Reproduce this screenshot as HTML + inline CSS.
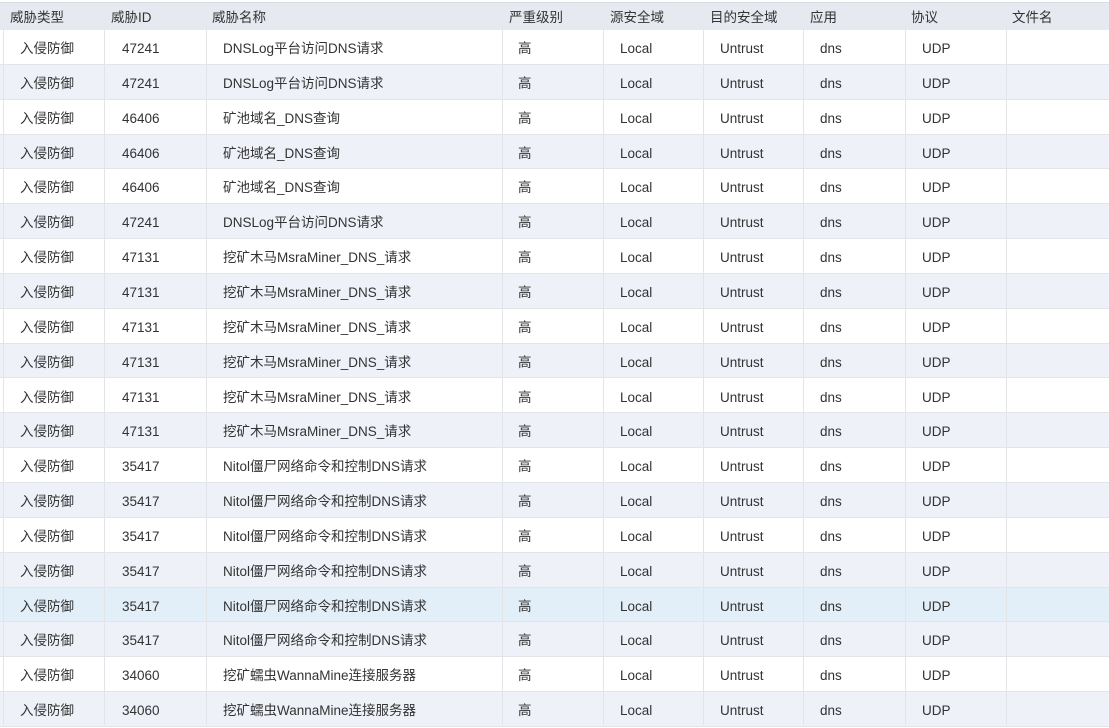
<!DOCTYPE html><html><head><meta charset="utf-8"><style>
body{margin:0;width:1109px;height:725px;overflow:hidden;background:#fff;font-family:"Liberation Sans","Noto Sans CJK SC",sans-serif;font-size:13.5px;color:#333}
.h{position:absolute;top:2px;left:0;width:1109px;height:28px;background:#e6eaf0;border-top:1px solid #d8dce3}
.h span{position:absolute;top:1px;line-height:28px;height:28px;color:#333}
.r{position:absolute;left:0;width:1109px;height:34.85px;border-bottom:1px solid #e2e4e8;box-sizing:border-box}
.r span{position:absolute;top:2px;line-height:34px;height:34px}
.v{position:absolute;top:30px;bottom:0;width:1px;background:#e2e4e8}
</style></head><body>
<div class="h"><span style="left:10px">威胁类型</span><span style="left:111px">威胁ID</span><span style="left:212px">威胁名称</span><span style="left:509px">严重级别</span><span style="left:610px">源安全域</span><span style="left:710px">目的安全域</span><span style="left:810px">应用</span><span style="left:911px">协议</span><span style="left:1012px">文件名</span></div>
<div id="rows"></div>
<script>
var d=[["47241","DNSLog平台访问DNS请求"],["47241","DNSLog平台访问DNS请求"],["46406","矿池域名_DNS查询"],["46406","矿池域名_DNS查询"],["46406","矿池域名_DNS查询"],["47241","DNSLog平台访问DNS请求"],["47131","挖矿木马MsraMiner_DNS_请求"],["47131","挖矿木马MsraMiner_DNS_请求"],["47131","挖矿木马MsraMiner_DNS_请求"],["47131","挖矿木马MsraMiner_DNS_请求"],["47131","挖矿木马MsraMiner_DNS_请求"],["47131","挖矿木马MsraMiner_DNS_请求"],["35417","Nitol僵尸网络命令和控制DNS请求"],["35417","Nitol僵尸网络命令和控制DNS请求"],["35417","Nitol僵尸网络命令和控制DNS请求"],["35417","Nitol僵尸网络命令和控制DNS请求"],["35417","Nitol僵尸网络命令和控制DNS请求"],["35417","Nitol僵尸网络命令和控制DNS请求"],["34060","挖矿蠕虫WannaMine连接服务器"],["34060","挖矿蠕虫WannaMine连接服务器"]];
var h="";d.forEach(function(x,i){var bg=i==16?"#e3eff8":(i%2?"#eef1f8":"#fff");
h+='<div class="r" style="top:'+(30+i*34.85)+'px;background:'+bg+'"><span style="left:20px">入侵防御</span><span style="left:122px">'+x[0]+'</span><span style="left:223px">'+x[1]+'</span><span style="left:518px">高</span><span style="left:620px">Local</span><span style="left:720px">Untrust</span><span style="left:820px">dns</span><span style="left:922px">UDP</span></div>';});
[3,104,206,502,603,703,803,905,1006].forEach(function(x){h+='<div class="v" style="left:'+x+'px"></div>'});
document.getElementById("rows").innerHTML=h;
</script>
</body></html>
